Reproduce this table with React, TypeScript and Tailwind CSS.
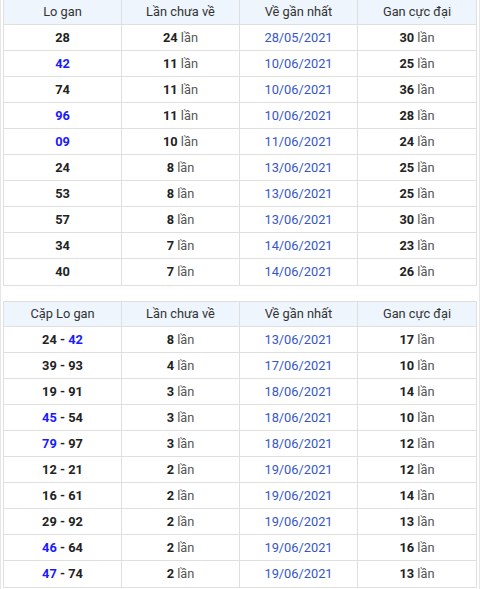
import React from "react";

type Part = { t: string; blue?: boolean };
type Row = { first: Part[]; count: string; date: string; max: string };

const t1: Row[] = [
  { first: [{ t: "28" }], count: "24", date: "28/05/2021", max: "30" },
  { first: [{ t: "42", blue: true }], count: "11", date: "10/06/2021", max: "25" },
  { first: [{ t: "74" }], count: "11", date: "10/06/2021", max: "36" },
  { first: [{ t: "96", blue: true }], count: "11", date: "10/06/2021", max: "28" },
  { first: [{ t: "09", blue: true }], count: "10", date: "11/06/2021", max: "24" },
  { first: [{ t: "24" }], count: "8", date: "13/06/2021", max: "25" },
  { first: [{ t: "53" }], count: "8", date: "13/06/2021", max: "25" },
  { first: [{ t: "57" }], count: "8", date: "13/06/2021", max: "30" },
  { first: [{ t: "34" }], count: "7", date: "14/06/2021", max: "23" },
  { first: [{ t: "40" }], count: "7", date: "14/06/2021", max: "26" },
];

const t2: Row[] = [
  { first: [{ t: "24" }, { t: " - " }, { t: "42", blue: true }], count: "8", date: "13/06/2021", max: "17" },
  { first: [{ t: "39" }, { t: " - " }, { t: "93" }], count: "4", date: "17/06/2021", max: "10" },
  { first: [{ t: "19" }, { t: " - " }, { t: "91" }], count: "3", date: "18/06/2021", max: "14" },
  { first: [{ t: "45", blue: true }, { t: " - " }, { t: "54" }], count: "3", date: "18/06/2021", max: "10" },
  { first: [{ t: "79", blue: true }, { t: " - " }, { t: "97" }], count: "3", date: "18/06/2021", max: "12" },
  { first: [{ t: "12" }, { t: " - " }, { t: "21" }], count: "2", date: "19/06/2021", max: "12" },
  { first: [{ t: "16" }, { t: " - " }, { t: "61" }], count: "2", date: "19/06/2021", max: "14" },
  { first: [{ t: "29" }, { t: " - " }, { t: "92" }], count: "2", date: "19/06/2021", max: "13" },
  { first: [{ t: "46", blue: true }, { t: " - " }, { t: "64" }], count: "2", date: "19/06/2021", max: "16" },
  { first: [{ t: "47", blue: true }, { t: " - " }, { t: "74" }], count: "2", date: "19/06/2021", max: "13" },
];

function Lan({ n }: { n: string }) {
  return (
    <span>
      <span className="font-bold text-[#222]">{n}</span>
      <span className="text-[#555]"> lần</span>
    </span>
  );
}

function Table({ head, rows, top }: { head: string; rows: Row[]; top: boolean }) {
  const cell = "flex items-center justify-center border-r border-[#dfdfdf] last:border-r-0";
  return (
    <div className={`border-l border-r border-b border-[#dfdfdf] ${top ? "border-t" : ""}`}>
      <div className={`grid grid-cols-4 bg-[#eef5fd] border-b border-[#dfdfdf] text-[#333] ${top ? "h-[25px]" : "h-[25px]"}`}>
        <div className={cell}>{head}</div>
        <div className={cell}>Lần chưa về</div>
        <div className={cell}>Về gần nhất</div>
        <div className={cell}>Gan cực đại</div>
      </div>
      {rows.map((r, i) => (
        <div
          key={i}
          className={`grid grid-cols-4 h-[26px] ${i < rows.length - 1 ? "border-b border-[#dfdfdf]" : "h-[25px]"}`}
        >
          <div className={`${cell} font-bold`}>
            {r.first.map((p, j) => (
              <span key={j} className={p.blue ? "text-[#1a1aff]" : "text-[#222]"} style={{ whiteSpace: "pre" }}>
                {p.t}
              </span>
            ))}
          </div>
          <div className={cell}>
            <Lan n={r.count} />
          </div>
          <div className={`${cell} text-[#3556c6]`}>{r.date}</div>
          <div className={cell}>
            <Lan n={r.max} />
          </div>
        </div>
      ))}
    </div>
  );
}

export default function App() {
  return (
    <div
      className="w-[480px] h-[589px] bg-white border-l border-r border-[#e6e6e6] px-[2px] overflow-hidden text-[12.8px]"
      style={{ fontFamily: "Roboto, 'Liberation Sans', sans-serif" }}
    >
      <div className="-mt-px">
        <Table head="Lo gan" rows={t1} top={true} />
      </div>
      <div className="mt-[15px]">
        <Table head="Cặp Lo gan" rows={t2} top={true} />
      </div>
    </div>
  );
}
